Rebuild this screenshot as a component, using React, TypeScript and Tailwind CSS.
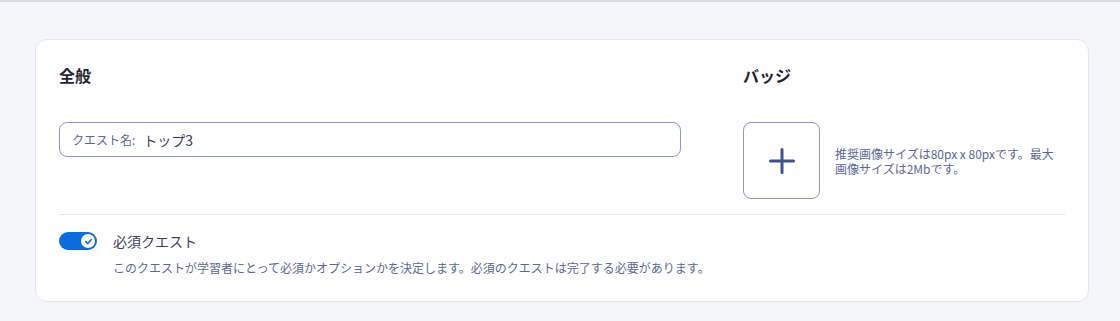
export default function App() {
  return (
    <div
      className="min-h-[321px] w-full bg-[#f5f6f9] border-t-2 border-[#d7dbe5] pt-[37px] pb-[18px]"
      style={{ fontFamily: '"Noto Sans CJK JP", "Noto Sans", sans-serif' }}
    >
      <div className="ml-[35px] w-[1054px] bg-white border border-[#e2e6f0] rounded-xl px-[23px] pt-[23px] pb-[24px]">
        <div className="flex">
          {/* 全般 */}
          <div className="w-[622px]">
            <h2 className="text-base font-bold text-[#1f2532] leading-6">全般</h2>
            <div className="mt-[35px] h-[35px] border border-[#8b99c9] rounded-lg flex items-center px-3">
              <span className="text-xs text-[#5b6798]">クエスト名:</span>
              <span className="ml-2 text-sm text-[#3b4258]">トップ3</span>
            </div>
          </div>

          {/* バッジ */}
          <div className="ml-[62px] flex-1">
            <h2 className="text-base font-bold text-[#1f2532] leading-6">バッジ</h2>
            <div className="mt-[35px] flex items-center">
              <button className="w-[77px] h-[77px] shrink-0 border border-[#8b99c9] rounded-lg flex items-center justify-center">
                <svg width="26" height="26" viewBox="0 0 26 26" fill="none">
                  <path d="M13 1.5 V24.5 M1.5 13 H24.5" stroke="#3f5190" strokeWidth="3" strokeLinecap="round" />
                </svg>
              </button>
              <p className="ml-[15px] text-xs leading-[15px] text-[#5b6798]">
                推奨画像サイズは80px x 80pxです。最大画像サイズは2Mbです。
              </p>
            </div>
          </div>
        </div>

        <div className="mt-[15px] border-t border-[#e3e8f2]" />

        <div className="mt-[17px] flex">
          <div className="w-[38px] h-[18px] rounded-full bg-[#0a6ddb] flex items-center justify-end pr-[2px] shrink-0">
            <div className="w-[14px] h-[14px] rounded-full bg-white flex items-center justify-center">
              <svg width="9" height="9" viewBox="0 0 10 10" fill="none">
                <path d="M2 5.2 L4.2 7.3 L8 3" stroke="#0a6ddb" strokeWidth="1.8" strokeLinecap="round" strokeLinejoin="round" />
              </svg>
            </div>
          </div>
          <div className="ml-4">
            <p className="text-sm leading-[18px] text-[#3b4258]">必須クエスト</p>
            <p className="mt-[9px] text-xs leading-[18px] text-[#5b6798]">
              このクエストが学習者にとって必須かオプションかを決定します。必須のクエストは完了する必要があります。
            </p>
          </div>
        </div>
      </div>
    </div>
  );
}
